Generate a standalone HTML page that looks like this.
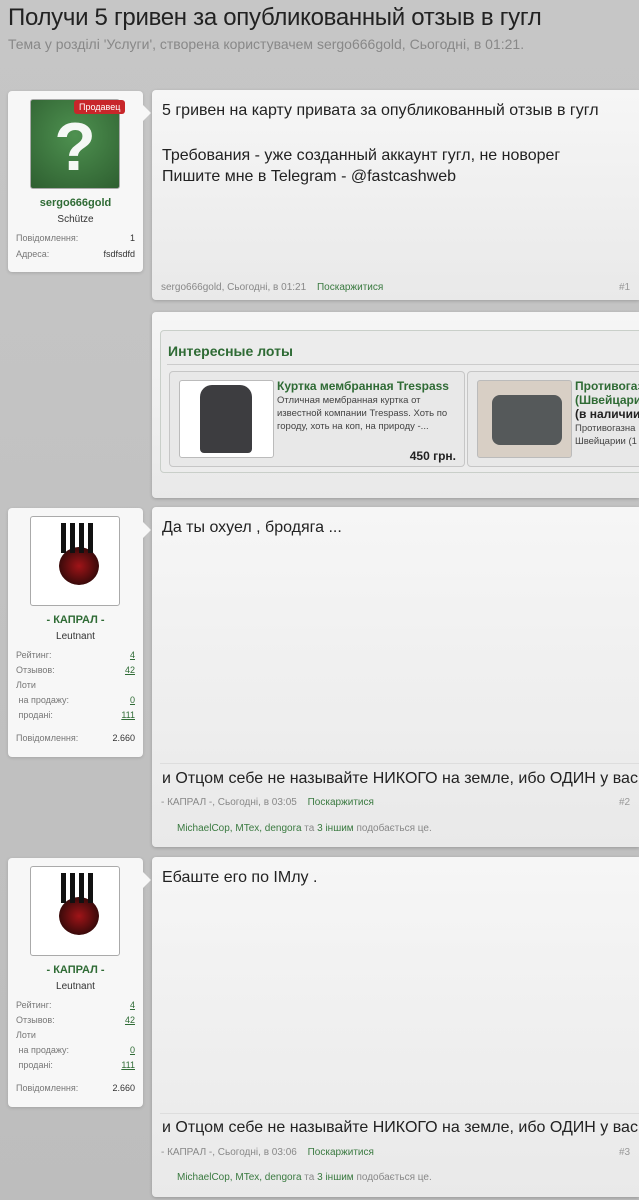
<!DOCTYPE html>
<html><head><meta charset="utf-8"><style>
*{box-sizing:border-box;margin:0;padding:0}
body{width:639px;height:1200px;overflow:hidden;background:linear-gradient(#c6c6c6,#bdbdbd);font-family:"Liberation Sans",sans-serif;position:relative;color:#222}
.abs{position:absolute}
h1{position:absolute;left:8px;top:4px;font-size:24px;font-weight:normal;color:#222;letter-spacing:-0.3px;white-space:nowrap}
.sub{position:absolute;left:8px;top:36px;font-size:14px;color:#888;white-space:nowrap}
.card{position:absolute;left:8px;width:135px;background:#f7f7f7;border-radius:4px;box-shadow:0 1px 3px rgba(0,0,0,.15)}
.card:after{content:"";position:absolute;right:-8px;top:14px;border:8px solid transparent;border-left-color:#f7f7f7;border-right:0}
.av{position:absolute;left:22px;top:8px;width:90px;height:90px;border:1px solid #aaa;border-radius:3px;padding:2px;background:#fff}
.name{position:absolute;left:0;width:135px;text-align:center;font-size:11px;font-weight:bold;color:#2f6b35}
.rank{position:absolute;left:0;width:135px;text-align:center;font-size:10px;color:#333}
.row{position:absolute;left:8px;right:8px;font-size:9px;color:#777}
.row b{position:absolute;right:0;font-weight:normal;color:#333}
.row u{position:absolute;right:0;color:#2f6b35}
.post{position:absolute;left:152px;width:487px;overflow:hidden;background:linear-gradient(#f6f6f6,#e9e9e9);border-radius:4px 0 0 4px;box-shadow:0 1px 3px rgba(0,0,0,.2)}
.txt{position:absolute;left:10px;font-size:16px;color:#222;white-space:nowrap;line-height:21px}
.meta{position:absolute;left:9px;font-size:10px;color:#888;white-space:nowrap}
.meta span{color:#3a7a40;margin-left:8px}
.num{position:absolute;left:467px;font-size:10px;color:#999}
.likes{position:absolute;left:25px;font-size:10px;color:#888;white-space:nowrap}
.likes span{color:#3a7a40}
.sep{position:absolute;left:8px;right:0;border-top:1px solid #ddd}
</style></head><body>
<h1>Получи 5 гривен за опубликованный отзыв в гугл</h1>
<div class="sub">Тема у розділі 'Услуги', створена користувачем sergo666gold, Сьогодні, в 01:21.</div>

<div class="card" style="top:91px;height:181px">
 <div class="av" style="padding:0;background:radial-gradient(circle at 50% 40%,#4e9150,#2e5f30)">
  <div style="position:absolute;left:0;width:88px;top:8px;text-align:center;color:#fff;font-size:68px;font-weight:bold;opacity:.95">?</div>
 </div>
 <div class="abs" style="left:66px;top:9px;background:#c8262a;color:#fff;font-size:9px;padding:2px 5px;border-radius:3px">Продавец</div>
 <div class="name" style="top:106px">sergo666gold</div>
 <div class="rank" style="top:123px">Schütze</div>
 <div class="row" style="top:142px">Повідомлення:<b>1</b></div>
 <div class="row" style="top:158px">Адреса:<b>fsdfsdfd</b></div>
</div>
<div class="post" style="top:90px;height:210px">
 <div class="txt" style="top:10px">5 гривен на карту привата за опубликованный отзыв в гугл</div>
 <div class="txt" style="top:55px">Требования - уже созданный аккаунт гугл, не новорег</div>
 <div class="txt" style="top:76px">Пишите мне в Telegram - @fastcashweb</div>
 <div class="meta" style="top:192px">sergo666gold, Сьогодні, в 01:21 <span>Поскаржитися</span></div>
 <div class="num" style="top:192px">#1</div>
</div>

<div class="post" style="top:312px;height:186px">
 <div class="abs" style="left:8px;top:18px;width:500px;height:143px;border:1px solid #c9cfc9;border-radius:4px;background:#ececec">
  <div class="abs" style="left:7px;top:12px;font-size:14px;font-weight:bold;color:#2f6b35">Интересные лоты</div>
  <div class="abs" style="left:6px;top:33px;right:0;border-top:1px solid #ccc"></div>
  <div class="abs" style="left:8px;top:40px;width:296px;height:96px;border:1px solid #c6c6c6;border-radius:4px;background:#e8e8e8">
   <div class="abs" style="left:9px;top:8px;width:95px;height:78px;background:#fff;border:1px solid #bbb;border-radius:3px">
    <div class="abs" style="left:20px;top:4px;width:52px;height:68px;background:#3d3d40;border-radius:12px 12px 4px 4px"></div>
   </div>
   <div class="abs" style="left:107px;top:7px;font-size:12px;font-weight:bold;color:#2f6b35;white-space:nowrap">Куртка мембранная Trespass</div>
   <div class="abs" style="left:107px;top:22px;width:180px;font-size:9.5px;line-height:13px;color:#444">Отличная мембранная куртка от известной компании Trespass. Хоть по городу, хоть на коп, на природу -...</div>
   <div class="abs" style="right:8px;top:77px;font-size:12px;font-weight:bold;color:#222">450 грн.</div>
  </div>
  <div class="abs" style="left:306px;top:40px;width:200px;height:96px;border:1px solid #c6c6c6;border-radius:4px;background:#e8e8e8">
   <div class="abs" style="left:9px;top:8px;width:95px;height:78px;background:#d8cfc5;border:1px solid #bbb;border-radius:3px">
    <div class="abs" style="left:14px;top:14px;width:70px;height:50px;background:#55595a;border-radius:8px"></div>
   </div>
   <div class="abs" style="left:107px;top:7px;font-size:12px;font-weight:bold;color:#2f6b35;line-height:14px;white-space:nowrap">Противогазн<br>(Швейцария<br><span style="color:#222">(в наличии</span></div>
   <div class="abs" style="left:107px;top:50px;font-size:9.5px;line-height:13px;color:#444;white-space:nowrap">Противогазна<br>Швейцарии (1</div>
  </div>
 </div>
</div>

<div class="card" style="top:508px;height:249px">
 <div class="av"><div class="abs" style="left:28px;top:30px;width:40px;height:38px;border-radius:50%;background:radial-gradient(#a01418,#3a0a0a 70%,transparent 72%)"></div><div class="abs" style="left:30px;top:6px;width:34px;height:30px;background:repeating-linear-gradient(90deg,#111 0 5px,transparent 5px 9px)"></div></div>
 <div class="name" style="top:106px">- КАПРАЛ -</div>
 <div class="rank" style="top:123px">Leutnant</div>
 <div class="row" style="top:142px">Рейтинг:<u>4</u></div>
 <div class="row" style="top:157px">Отзывов:<u>42</u></div>
 <div class="row" style="top:172px">Лоти</div>
 <div class="row" style="top:187px">&nbsp;на продажу:<u>0</u></div>
 <div class="row" style="top:202px">&nbsp;продані:<u>111</u></div>
 <div class="row" style="top:225px">Повідомлення:<b>2.660</b></div>
</div>
<div class="post" style="top:507px;height:340px">
 <div class="txt" style="top:10px">Да ты охуел , бродяга ...</div>
 <div class="sep" style="top:256px"></div>
 <div class="txt" style="top:261px">и Отцом себе не называйте НИКОГО на земле, ибо ОДИН у вас Отец, Ко</div>
 <div class="meta" style="top:290px">- КАПРАЛ -, Сьогодні, в 03:05 <span>Поскаржитися</span></div>
 <div class="num" style="top:290px">#2</div>
 <div class="likes" style="top:316px"><span>MichaelCop, MTex, dengora</span> та <span>3 іншим</span> подобається це.</div>
</div>

<div class="card" style="top:858px;height:249px">
 <div class="av"><div class="abs" style="left:28px;top:30px;width:40px;height:38px;border-radius:50%;background:radial-gradient(#a01418,#3a0a0a 70%,transparent 72%)"></div><div class="abs" style="left:30px;top:6px;width:34px;height:30px;background:repeating-linear-gradient(90deg,#111 0 5px,transparent 5px 9px)"></div></div>
 <div class="name" style="top:106px">- КАПРАЛ -</div>
 <div class="rank" style="top:123px">Leutnant</div>
 <div class="row" style="top:142px">Рейтинг:<u>4</u></div>
 <div class="row" style="top:157px">Отзывов:<u>42</u></div>
 <div class="row" style="top:172px">Лоти</div>
 <div class="row" style="top:187px">&nbsp;на продажу:<u>0</u></div>
 <div class="row" style="top:202px">&nbsp;продані:<u>111</u></div>
 <div class="row" style="top:225px">Повідомлення:<b>2.660</b></div>
</div>
<div class="post" style="top:857px;height:340px">
 <div class="txt" style="top:10px">Ебаште его по IMлу .</div>
 <div class="sep" style="top:256px"></div>
 <div class="txt" style="top:260px">и Отцом себе не называйте НИКОГО на земле, ибо ОДИН у вас Отец, Ко</div>
 <div class="meta" style="top:290px">- КАПРАЛ -, Сьогодні, в 03:06 <span>Поскаржитися</span></div>
 <div class="num" style="top:290px">#3</div>
 <div class="likes" style="top:315px"><span>MichaelCop, MTex, dengora</span> та <span>3 іншим</span> подобається це.</div>
</div>
</body></html>
